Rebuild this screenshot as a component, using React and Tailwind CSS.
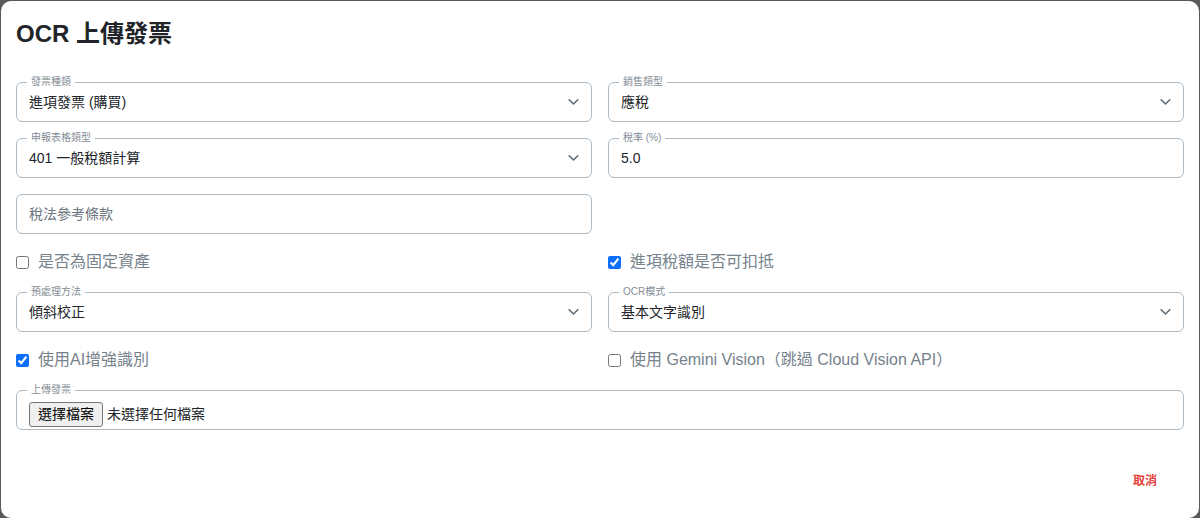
import React, { useState } from "react";

const FONT = { fontFamily: '"Liberation Sans", "Noto Sans CJK TC", sans-serif' };

function Chevron() {
  return (
    <svg className="absolute right-[12px] top-1/2 -translate-y-1/2 pointer-events-none" width="11" height="7" viewBox="0 0 11 7">
      <path d="M1.2 1.2l4.3 4.3 4.3-4.3" fill="none" stroke="#5f6b75" strokeWidth="1.6" strokeLinecap="round" strokeLinejoin="round" />
    </svg>
  );
}

function Field({ label, children }) {
  return (
    <div className="relative h-10 rounded-md border border-[#aebac4] bg-white">
      {label && (
        <span className="absolute -top-[7px] left-[10px] bg-white px-[4px] text-[10px] leading-[12px] text-[#848d95]">
          {label}
        </span>
      )}
      {children}
    </div>
  );
}

function SelectField({ label, value, options }) {
  const [v, setV] = useState(value);
  return (
    <Field label={label}>
      <select
        value={v}
        onChange={e => setV(e.target.value)}
        className="h-full w-full appearance-none bg-transparent pl-[12px] pr-8 text-[14px] text-[#212529] outline-none"
        style={FONT}
      >
        {options.map(o => <option key={o} value={o}>{o}</option>)}
      </select>
      <Chevron />
    </Field>
  );
}

function TextField({ label, value, placeholder }) {
  const [v, setV] = useState(value || "");
  return (
    <Field label={label}>
      <input
        value={v}
        placeholder={placeholder}
        onChange={e => setV(e.target.value)}
        className="h-full w-full bg-transparent px-[12px] text-[14px] text-[#212529] placeholder:text-[#6c757d] outline-none"
        style={FONT}
      />
    </Field>
  );
}

function Check({ label, checked }) {
  const [c, setC] = useState(checked);
  return (
    <label className="flex h-6 items-center gap-[9px] text-[16px] text-[#76828c]">
      <input type="checkbox" checked={c} onChange={e => setC(e.target.checked)} className="m-0 h-[13px] w-[13px] accent-[#0b6efd]" />
      <span>{label}</span>
    </label>
  );
}

export default function App() {
  return (
    <div className="h-[518px] overflow-hidden bg-[#595959] px-px pt-px" style={FONT}>
      <div className="h-[517px] rounded-[10px] bg-white px-[15px]">
        <h1 className="pt-[18px] text-[24px] font-bold leading-[29px] text-[#212529]">OCR 上傳發票</h1>

        <div className="mt-[34px] grid grid-cols-2 gap-x-4 gap-y-4">
          <SelectField label="發票種類" value="進項發票 (購買)" options={["進項發票 (購買)", "銷項發票 (銷售)"]} />
          <SelectField label="銷售類型" value="應稅" options={["應稅", "零稅率", "免稅"]} />
          <SelectField label="申報表格類型" value="401 一般稅額計算" options={["401 一般稅額計算", "403 特種稅額計算"]} />
          <TextField label="稅率 (%)" value="5.0" />
          <TextField placeholder="稅法參考條款" />
          <div />
        </div>

        <div className="mt-4 grid grid-cols-2 gap-x-4">
          <Check label="是否為固定資產" checked={false} />
          <Check label="進項稅額是否可扣抵" checked />
        </div>

        <div className="mt-[18px] grid grid-cols-2 gap-x-4">
          <SelectField label="預處理方法" value="傾斜校正" options={["傾斜校正", "無", "二值化"]} />
          <SelectField label="OCR模式" value="基本文字識別" options={["基本文字識別", "文件文字識別"]} />
        </div>

        <div className="mt-4 grid grid-cols-2 gap-x-4">
          <Check label="使用AI增強識別" checked />
          <Check label="使用 Gemini Vision（跳過 Cloud Vision API）" checked={false} />
        </div>

        <div className="mt-[18px]">
          <Field label="上傳發票">
            <div className="flex h-full items-center gap-[4px] pl-[12px] pt-[8px] text-[14px] text-[#212529]">
              <button className="h-[25px] rounded-[3px] border border-[#767676] bg-[#efefef] px-[8px] text-[14px] text-black">選擇檔案</button>
              <span>未選擇任何檔案</span>
            </div>
          </Field>
        </div>

        <div className="mt-[42px] flex justify-end pr-[27px]">
          <button className="text-[12px] font-bold text-[#e5413a]">取消</button>
        </div>
      </div>
    </div>
  );
}
